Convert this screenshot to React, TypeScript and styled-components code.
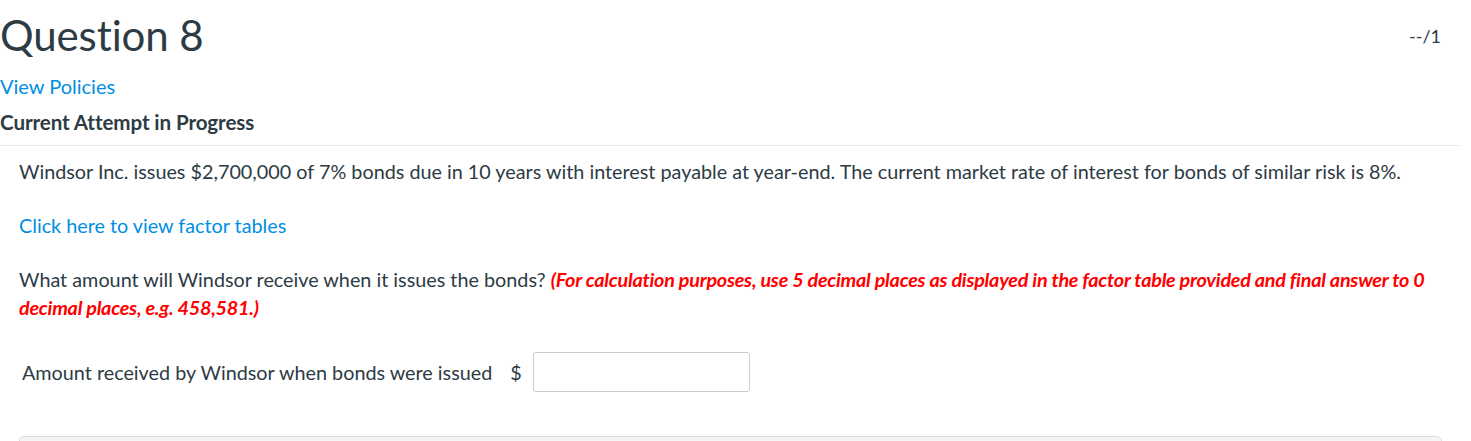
import React from 'react'
import styled, { createGlobalStyle } from 'styled-components'

const GlobalStyle = createGlobalStyle`
  body {
    margin: 0;
    background: #fff;
    font-family: Lato, 'Open Sans', sans-serif;
    color: #2d3b45;
  }
`

const Page = styled.div`
  padding-right: 11px;
`

const Header = styled.div`
  display: flex;
  justify-content: space-between;
  align-items: flex-start;
`

const Title = styled.h1`
  margin: 0;
  font-size: 42px;
  font-weight: 400;
  line-height: 1;
  padding-top: 14px;
  letter-spacing: -0.1px;
`

const Points = styled.span`
  font-size: 18px;
  padding-top: 25px;
  padding-right: 19px;
`

const Link = styled.a`
  color: #008ee2;
  text-decoration: none;
  cursor: pointer;
`

const Policies = styled.div`
  margin-top: 18px;
  font-size: 20px;
  line-height: 24px;
`

const Attempt = styled.div`
  margin-top: 12px;
  font-size: 20.6px;
  font-weight: 700;
  line-height: 24px;
  letter-spacing: -0.1px;
`

const Divider = styled.hr`
  margin: 11px 0 0;
  border: 0;
  border-top: 1px solid #e8e8e8;
`

const Body = styled.div`
  padding: 11px 18px 0 19px;
  font-size: 19.8px;
  line-height: 28px;
`

const Para = styled.p<{ $gap?: number }>`
  margin: 0 0 ${(p) => p.$gap ?? 26}px;
`

const Note = styled.em`
  color: #ff0000;
  font-weight: 700;
  letter-spacing: -0.24px;
`

const AnswerRow = styled.div`
  display: flex;
  align-items: center;
  margin-top: 31px;
  padding-left: 3px;
`

const Label = styled.span`
  font-size: 19.8px;
`

const Dollar = styled.span`
  margin-left: 18px;
  margin-right: 11px;
  font-size: 19.8px;
`

const Input = styled.input`
  width: 217px;
  height: 40px;
  box-sizing: border-box;
  border: 1px solid #c7cdd1;
  border-radius: 3px;
  font: inherit;
  padding: 0 8px;
`

const Panel = styled.div`
  margin: 44px 0 0;
  height: 40px;
  border: 1px solid #dcdcdc;
  border-radius: 5px;
  background: #f5f5f5;
`

export default function App() {
  return (
    <Page>
      <GlobalStyle />
      <Header>
        <Title>Question 8</Title>
        <Points>--/1</Points>
      </Header>
      <Policies>
        <Link>View Policies</Link>
      </Policies>
      <Attempt>Current Attempt in Progress</Attempt>
      <Divider />
      <Body>
        <Para>
          Windsor Inc. issues $2,700,000 of 7% bonds due in 10 years with interest payable at year-end. The current
          market rate of interest for bonds of similar risk is 8%.
        </Para>
        <Para>
          <Link>Click here to view factor tables</Link>
        </Para>
        <Para $gap={0}>
          What amount will Windsor receive when it issues the bonds?{' '}
          <Note>
            (For calculation purposes, use 5 decimal places as displayed in the factor table provided and final
            answer to 0 decimal places, e.g. 458,581.)
          </Note>
        </Para>
        <AnswerRow>
          <Label>Amount received by Windsor when bonds were issued</Label>
          <Dollar>$</Dollar>
          <Input type="text" />
        </AnswerRow>
        <Panel />
      </Body>
    </Page>
  )
}
